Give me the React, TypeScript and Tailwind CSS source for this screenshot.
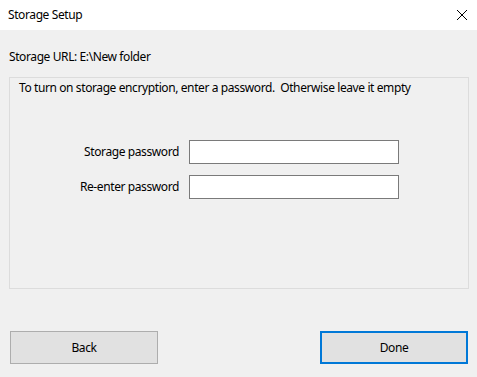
export default function App() {
  return (
    <div className="w-[477px] h-[377px] flex flex-col bg-[#f0f0f0] text-[12px] leading-[16px] tracking-[-0.4px] text-black font-['Noto_Sans',sans-serif]">
      <div className="h-[30px] bg-white flex items-center justify-between pl-[8px] pr-[9px]">
        <span>Storage Setup</span>
        <svg width="12" height="12" viewBox="0 0 12 12" className="text-black">
          <path d="M1 1 L11 11 M11 1 L1 11" stroke="currentColor" strokeWidth="1" />
        </svg>
      </div>

      <div className="pt-[19px] pl-[9px]">Storage URL: E:\New folder</div>

      <div className="mt-[12px] ml-[9px] mr-[8px] h-[212px] border border-[#dcdcdc] pt-[2px] pl-[9px]">
        <div>To turn on storage encryption, enter a password.&nbsp; Otherwise leave it empty</div>

        <div className="mt-[44px] flex flex-col gap-[11px]">
          <div className="flex items-center">
            <label className="w-[160px] text-right">Storage password</label>
            <div className="ml-[10px] w-[210px] h-[24px] bg-white border border-[#7a7a7a]" />
          </div>
          <div className="flex items-center">
            <label className="w-[160px] text-right">Re-enter password</label>
            <div className="ml-[10px] w-[210px] h-[24px] bg-white border border-[#7a7a7a]" />
          </div>
        </div>
      </div>

      <div className="mt-[42px] flex justify-between pl-[10px] pr-[9px]">
        <button className="w-[148px] h-[33px] bg-[#e1e1e1] border border-[#adadad]">Back</button>
        <button className="w-[148px] h-[33px] bg-[#e1e1e1] border-2 border-[#0078d7]">Done</button>
      </div>
    </div>
  );
}
